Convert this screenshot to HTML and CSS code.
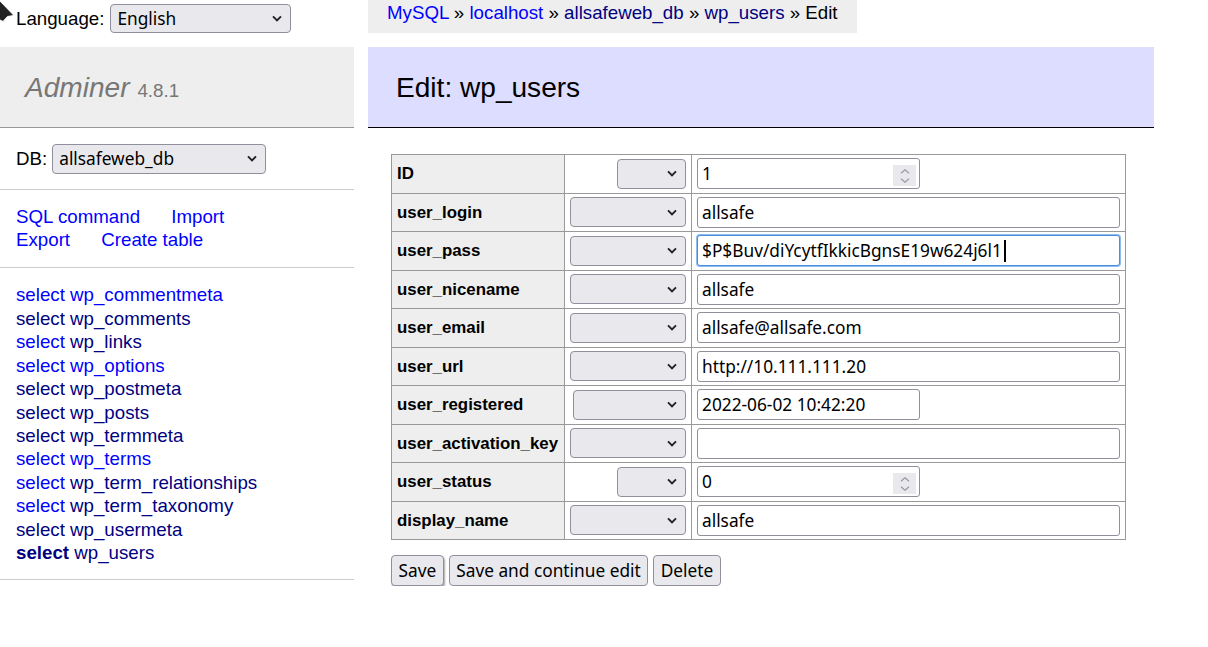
FILE: index.html
```html
<!DOCTYPE html>
<html lang="en">
<head>
<meta charset="utf-8">
<title>Edit: wp_users - Adminer</title>
<link rel="stylesheet" href="styles.css">
</head>
<body>
<div class="page">
  <aside class="sidebar">
    <div class="lang">Language: <select class="ctl sel-lang"><option>English</option></select></div>
    <h1 class="logo"><a class="brand" href="#">Adminer</a> <span class="version">4.8.1</span></h1>
    <div class="dbsel">DB: <select class="ctl sel-db"><option>allsafeweb_db</option></select></div>
    <p class="links"><a href="#">SQL command</a> <a href="#">Import</a><br><a href="#">Export</a> <a href="#">Create table</a></p>
    <ul class="tables">
      <li><a href="#">select</a> <a href="#">wp_commentmeta</a></li>
      <li><a class="v" href="#">select</a> <a class="v" href="#">wp_comments</a></li>
      <li><a href="#">select</a> <a class="v" href="#">wp_links</a></li>
      <li><a href="#">select</a> <a href="#">wp_options</a></li>
      <li><a class="v" href="#">select</a> <a class="v" href="#">wp_postmeta</a></li>
      <li><a class="v" href="#">select</a> <a class="v" href="#">wp_posts</a></li>
      <li><a class="v" href="#">select</a> <a class="v" href="#">wp_termmeta</a></li>
      <li><a href="#">select</a> <a href="#">wp_terms</a></li>
      <li><a href="#">select</a> <a class="v" href="#">wp_term_relationships</a></li>
      <li><a href="#">select</a> <a class="v" href="#">wp_term_taxonomy</a></li>
      <li><a class="v" href="#">select</a> <a class="v" href="#">wp_usermeta</a></li>
      <li><a class="v active" href="#">select</a> <a class="v" href="#">wp_users</a></li>
    </ul>
  </aside>
  <main class="content">
    <div class="breadcrumb"><a href="#">MySQL</a> » <a href="#">localhost</a> » <a class="v" href="#">allsafeweb_db</a> » <a class="v" href="#">wp_users</a> » Edit</div>
    <h2 class="title">Edit: wp_users</h2>
    <form class="editform">
      <table class="edit">
        <tr>
          <th>ID</th>
          <td class="fn"><select class="ctl fsel fsel-n"><option></option></select></td>
          <td><span class="numbox"><input type="text" value="1"><span class="spin"><svg width="10" height="5" viewBox="0 0 10 5"><path d="M1 4.3 L5 0.8 L9 4.3" fill="none" stroke="#9a9aa6" stroke-width="1.3"/></svg><svg width="10" height="5" viewBox="0 0 10 5"><path d="M1 0.7 L5 4.2 L9 0.7" fill="none" stroke="#9a9aa6" stroke-width="1.3"/></svg></span></span></td>
        </tr>
        <tr>
          <th>user_login</th>
          <td class="fn"><select class="ctl fsel"><option></option></select></td>
          <td><input class="txt" type="text" value="allsafe"></td>
        </tr>
        <tr>
          <th>user_pass</th>
          <td class="fn"><select class="ctl fsel"><option></option></select></td>
          <td><span class="field"><input class="txt focus" type="text" value="$P$Buv/diYcytfIkkicBgnsE19w624j6l1"><span class="caret"></span></span></td>
        </tr>
        <tr>
          <th>user_nicename</th>
          <td class="fn"><select class="ctl fsel"><option></option></select></td>
          <td><input class="txt" type="text" value="allsafe"></td>
        </tr>
        <tr>
          <th>user_email</th>
          <td class="fn"><select class="ctl fsel"><option></option></select></td>
          <td><input class="txt" type="text" value="allsafe@allsafe.com"></td>
        </tr>
        <tr>
          <th>user_url</th>
          <td class="fn"><select class="ctl fsel"><option></option></select></td>
          <td><input class="txt" type="text" value="http://10.111.111.20"></td>
        </tr>
        <tr>
          <th>user_registered</th>
          <td class="fn"><select class="ctl fsel fsel-d"><option></option></select></td>
          <td><input class="txt short" type="text" value="2022-06-02 10:42:20"></td>
        </tr>
        <tr>
          <th>user_activation_key</th>
          <td class="fn"><select class="ctl fsel"><option></option></select></td>
          <td><input class="txt" type="text" value=""></td>
        </tr>
        <tr>
          <th>user_status</th>
          <td class="fn"><select class="ctl fsel fsel-n"><option></option></select></td>
          <td><span class="numbox"><input type="text" value="0"><span class="spin"><svg width="10" height="5" viewBox="0 0 10 5"><path d="M1 4.3 L5 0.8 L9 4.3" fill="none" stroke="#9a9aa6" stroke-width="1.3"/></svg><svg width="10" height="5" viewBox="0 0 10 5"><path d="M1 0.7 L5 4.2 L9 0.7" fill="none" stroke="#9a9aa6" stroke-width="1.3"/></svg></span></span></td>
        </tr>
        <tr>
          <th>display_name</th>
          <td class="fn"><select class="ctl fsel"><option></option></select></td>
          <td><input class="txt" type="text" value="allsafe"></td>
        </tr>
      </table>
      <p class="buttons">
        <button type="button" class="btn default">Save</button>
        <button type="button" class="btn">Save and continue edit</button>
        <button type="button" class="btn">Delete</button>
      </p>
    </form>
  </main>
</div>
<svg class="cursor" width="18" height="24" viewBox="0 0 18 24"><path d="M-2 -1 L14 15.5 L7.5 16.5 L3 21.5 L-2 19 Z" fill="#222" stroke="#fff" stroke-width="1"/></svg>
</body>
</html>
```

FILE: styles.css
```css
* { box-sizing: border-box; }

body {
  margin: 0;
  font: 18.72px/1.25 "Liberation Sans", Arial, Helvetica, sans-serif;
  color: #000;
  background: #fff;
}

a { color: #0000ff; text-decoration: none; }
a.v { color: #000080; }
a.active { font-weight: bold; }

.page {
  display: flex;
  align-items: flex-start;
}

/* ---------- sidebar ---------- */
.sidebar {
  width: 354px;
  flex: none;
}

.lang {
  display: flex;
  align-items: baseline;
  height: 47px;
  padding: 4px 0 0 16px;
  white-space: nowrap;
}

.ctl {
  -webkit-appearance: none;
  appearance: none;
  font: 17.3px "Noto Sans", "Open Sans", sans-serif;
  color: #000;
  background: #e9e9ed url("data:image/svg+xml,%3Csvg xmlns='http://www.w3.org/2000/svg' width='10' height='7' viewBox='0 0 10 7'%3E%3Cpath d='M1 1.3 L5 5.3 L9 1.3' fill='none' stroke='%23222' stroke-width='1.9'/%3E%3C/svg%3E") no-repeat right 8px center;
  border: 1px solid #8f8f9d;
  border-radius: 4px;
  padding: 0 24px 0 6px;
  margin: 0;
}

.sel-lang {
  width: 181px;
  height: 29px;
  margin-left: 6px;
}

.logo {
  margin: 0;
  height: 81px;
  padding: 22.5px 25px;
  font-size: 28.08px;
  line-height: 1.25;
  font-weight: normal;
  color: #777;
  background: #eee;
  border-bottom: 1px solid #999;
  white-space: nowrap;
}

.brand {
  color: #777;
  font-style: italic;
}

.version {
  color: #777;
  font-size: 67%;
}

.dbsel {
  display: flex;
  align-items: baseline;
  padding: 15.5px 16px;
  border-bottom: 1px solid #ccc;
}

.sel-db {
  width: 214px;
  height: 30px;
  margin-left: 5px;
}

.links {
  margin: 0;
  padding: 15px 16px;
  border-bottom: 1px solid #ccc;
}

.links a {
  margin-right: 26px;
  white-space: nowrap;
}

.tables {
  list-style: none;
  margin: 0;
  padding: 15.5px 16px 14.5px;
  border-bottom: 1px solid #ccc;
  line-height: 23.45px;
}

.tables li { white-space: nowrap; }

/* ---------- content ---------- */
.content {
  width: 786px;
  margin-left: 14px;
  display: flex;
  flex-direction: column;
  align-items: flex-start;
}

.breadcrumb {
  height: 33px;
  padding: 1px 19px 0;
  background: #eee;
  white-space: nowrap;
}

.title {
  align-self: stretch;
  margin: 14px 0 0;
  height: 81px;
  padding: 22.5px 28px;
  font-size: 28.08px;
  line-height: 1.25;
  font-weight: normal;
  background: #ddf;
  border-bottom: 1px solid #000;
}

.editform {
  margin: 26px 0 0 23px;
}

.edit {
  border-collapse: collapse;
  font-size: 16.85px;
}

.edit th,
.edit td {
  border: 1px solid #999;
  padding: 3.25px 5px;
  vertical-align: middle;
}

.edit th {
  background: #eee;
  text-align: left;
  white-space: nowrap;
  width: 173px;
}

.edit td.fn {
  text-align: right;
  width: 127px;
}

.fsel {
  width: 116px;
  height: 30px;
  vertical-align: middle;
  background-position: right 8.5px center;
}

.fsel-n { width: 69px; }
.fsel-d { width: 113px; }

.txt {
  font: 17.3px "Noto Sans", "Open Sans", sans-serif;
  color: #000;
  width: 423px;
  height: 31px;
  padding: 0 4px;
  margin: 0;
  border: 1px solid #8f8f9d;
  border-radius: 3px;
  background: #fff;
  vertical-align: middle;
  outline: none;
}

.txt.short { width: 223px; }

.txt.focus {
  border-color: #4a8fdc;
  box-shadow: 0 0 0 1px #8fbcee;
}

.field {
  position: relative;
  display: inline-block;
  vertical-align: middle;
}

.field .txt { display: block; }

.caret {
  position: absolute;
  left: 307px;
  top: 5px;
  width: 2px;
  height: 22px;
  background: #000;
}

.numbox {
  display: inline-flex;
  align-items: center;
  width: 223px;
  height: 31px;
  border: 1px solid #8f8f9d;
  border-radius: 3px;
  background: #fff;
  vertical-align: middle;
}

.numbox input {
  flex: 1;
  min-width: 0;
  height: 100%;
  border: 0;
  padding: 0 4px;
  margin: 0;
  font: 17.3px "Noto Sans", "Open Sans", sans-serif;
  color: #000;
  background: transparent;
  outline: none;
}

.spin {
  width: 23px;
  height: 21px;
  margin: 4px 3px 0 0;
  background: #e9e9ed;
  display: flex;
  flex-direction: column;
  align-items: center;
  justify-content: center;
  gap: 4px;
}

.spin svg { display: block; }

.buttons {
  display: flex;
  gap: 5px;
  margin: 15px 0 0;
}

.btn {
  font: 17.3px "Noto Sans", "Open Sans", sans-serif;
  color: #000;
  height: 31px;
  padding: 0 6.5px;
  margin: 0;
  border: 1px solid #8f8f9d;
  border-radius: 4px;
  background: #e9e9ed;
}

.btn.default {
  box-shadow: 1px 2px 2px rgba(0, 0, 0, 0.35);
}

.cursor {
  position: absolute;
  top: 0;
  left: 0;
  pointer-events: none;
}
```
